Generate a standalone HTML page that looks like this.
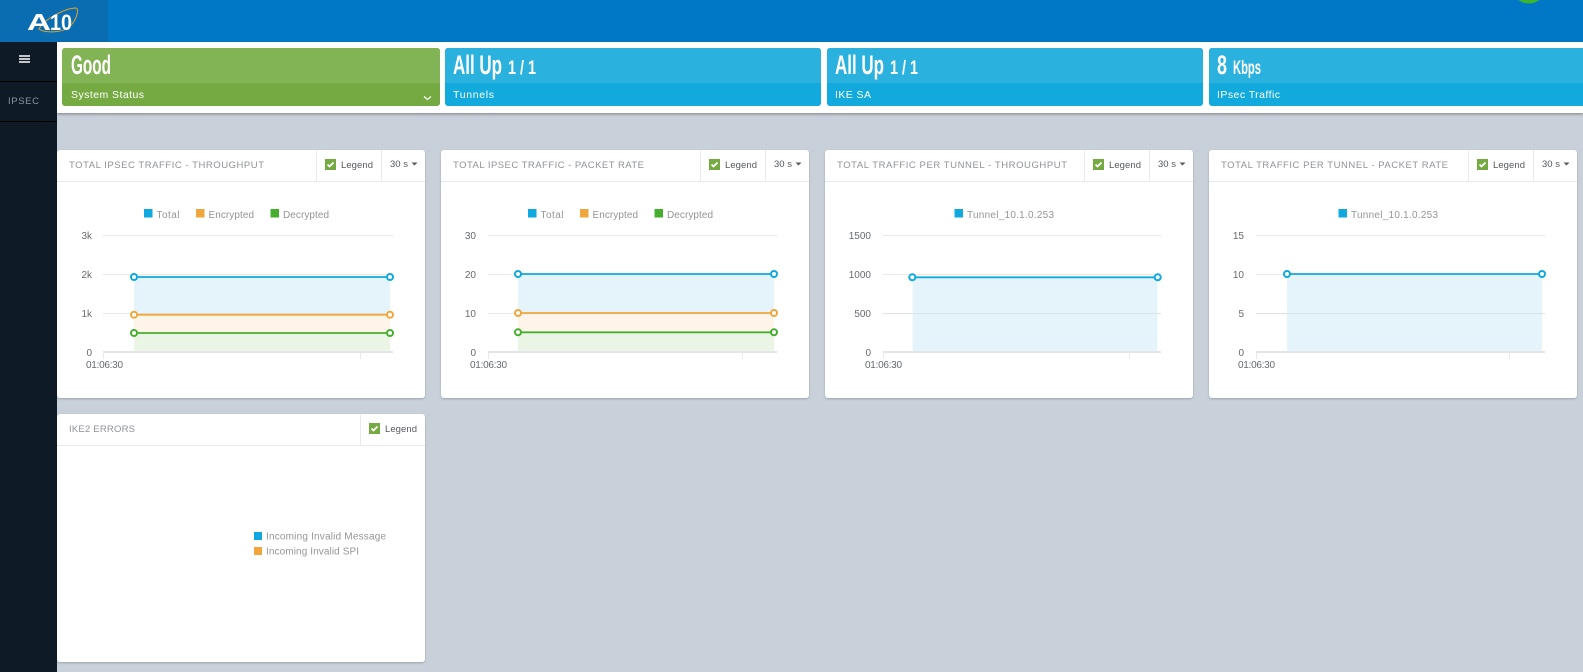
<!DOCTYPE html>
<html><head><meta charset="utf-8"><title>IPsec</title>
<style>
html,body{margin:0;padding:0;background:#c8d0da;width:1583px;height:672px;overflow:hidden}
svg{display:block;position:absolute;left:0;top:0;font-family:"Liberation Sans",sans-serif}
.t{font-size:9.5px;fill:#8f9399}
.l{font-size:10px;fill:#92959a}
.h{font-size:9.5px;fill:#55595e}
.a{font-size:10px;fill:#666a70}
.s{font-size:10.5px;fill:#fff}
.b{font-size:27px;fill:#fff;font-weight:bold}
.m{font-size:19.5px;fill:#fff;font-weight:bold}
.g{stroke:#e7e9ec;stroke-width:1;fill:none}
.x{stroke:#e3e5e8;stroke-width:2;fill:none}
.d{stroke:#e8eaec;stroke-width:1;fill:none}
.card{fill:#fff}
.cb{stroke:#0fa9df;stroke-width:1.8}
.co{stroke:#f1a63c;stroke-width:1.8}
.cg{stroke:#46b02e;stroke-width:1.8}
.pb{fill:#fff;stroke:#0fa9df;stroke-width:2}
.po{fill:#fff;stroke:#f1a63c;stroke-width:2}
.pg{fill:#fff;stroke:#46b02e;stroke-width:2}
</style></head>
<body>
<svg width="1583" height="672" viewBox="0 0 1583 672" xmlns="http://www.w3.org/2000/svg">
<defs>
<filter id="sh" x="-5%" y="-5%" width="110%" height="110%"><feDropShadow dx="0" dy="1" stdDeviation="1" flood-color="#000" flood-opacity=".22"/></filter>
<filter id="sh2" x="-5%" y="-20%" width="110%" height="140%"><feDropShadow dx="0" dy="1.5" stdDeviation="1.2" flood-color="#000" flood-opacity=".3"/></filter>
</defs>

<!-- header -->
<rect x="0" y="0" width="1583" height="42" fill="#0078c5"/>
<rect x="0" y="0" width="108" height="42" fill="#0a6cb1"/>
<ellipse cx="1529" cy="-13" rx="17" ry="16.500" fill="#3cb52f"/>
<!-- logo -->
<g>
<path d="M39 29C43 20 65 8 76 8C80 9 76 22 68 28C60 33 44 33 39 29Z" fill="none" stroke="#e5a52a" stroke-width="1"/>
<text x="27" y="30" font-size="23" font-weight="bold" fill="#fff" textLength="24" lengthAdjust="spacingAndGlyphs">A</text>
<text x="50" y="30" font-size="22" font-weight="bold" fill="#fff" textLength="22" lengthAdjust="spacingAndGlyphs">10</text>
</g>

<!-- top band -->
<rect x="57" y="42" width="1526" height="71" fill="#fff" filter="url(#sh2)"/>

<!-- sidebar -->
<rect x="0" y="42" width="57" height="630" fill="#0e1a25"/>
<rect x="0" y="81" width="57" height="1" fill="#000"/>
<rect x="0" y="121" width="57" height="1" fill="#000"/>
<rect x="19" y="55" width="11" height="2" fill="#c4c7ca"/>
<rect x="19" y="58" width="11" height="2" fill="#c4c7ca"/>
<rect x="19" y="61" width="11" height="2" fill="#c4c7ca"/>
<text x="8" y="104" font-size="9.5" fill="#8b95a0" textLength="31">IPSEC</text>

<!-- tiles -->
<rect x="62" y="48" width="378" height="58" rx="3" fill="#74aa41"/>
<path d="M62 83V51a3 3 0 0 1 3-3H437a3 3 0 0 1 3 3V83Z" fill="#82b354"/>
<text x="71" y="74" class="b" textLength="40" lengthAdjust="spacingAndGlyphs">Good</text>
<text x="71" y="98" class="s" textLength="73">System Status</text>
<path d="M424 96.500l3.500 3 3.500-3" fill="none" stroke="#fff" stroke-width="1.200"/>

<rect x="445" y="48" width="376" height="58" rx="3" fill="#12aadd"/>
<path d="M445 83V51a3 3 0 0 1 3-3H818a3 3 0 0 1 3 3V83Z" fill="#2bb1de"/>
<text x="453" y="74" class="b" textLength="49" lengthAdjust="spacingAndGlyphs">All Up</text>
<text x="508" y="74" class="m" textLength="28" lengthAdjust="spacingAndGlyphs">1 / 1</text>
<text x="453" y="98" class="s" textLength="41">Tunnels</text>

<rect x="827" y="48" width="376" height="58" rx="3" fill="#12aadd"/>
<path d="M827 83V51a3 3 0 0 1 3-3H1200a3 3 0 0 1 3 3V83Z" fill="#2bb1de"/>
<text x="835" y="74" class="b" textLength="49" lengthAdjust="spacingAndGlyphs">All Up</text>
<text x="890" y="74" class="m" textLength="28" lengthAdjust="spacingAndGlyphs">1 / 1</text>
<text x="835" y="98" class="s" textLength="36">IKE SA</text>

<rect x="1209" y="48" width="380" height="58" rx="3" fill="#12aadd"/>
<path d="M1209 83V51a3 3 0 0 1 3-3H1589V83Z" fill="#2bb1de"/>
<text x="1217" y="74" class="b" textLength="10" lengthAdjust="spacingAndGlyphs">8</text>
<text x="1233" y="74" class="m" textLength="28" lengthAdjust="spacingAndGlyphs">Kbps</text>
<text x="1217" y="98" class="s" textLength="63">IPsec Traffic</text>

<!-- CARD 1 -->
<rect class="card" x="57" y="150" width="368" height="248" rx="3" filter="url(#sh)"/>
<path class="d" d="M57 181.500H425M316.500 150V181M381.500 150V181"/>
<text class="t" x="69" y="168" textLength="195">TOTAL IPSEC TRAFFIC - THROUGHPUT</text>
<rect x="325" y="159" width="11" height="11" fill="#74aa41"/><path d="M327.500 164.500l2 2 4-4" fill="none" stroke="#fff" stroke-width="1.800"/>
<text class="h" x="341" y="168" textLength="32">Legend</text>
<text class="h" x="390" y="167" textLength="18">30 s</text>
<path d="M411.500 162.500h6l-3 3z" fill="#55595e"/>
<rect x="144" y="209" width="8.500" height="8.500" fill="#0fa9df"/><text class="l" x="156.500" y="218" textLength="23">Total</text>
<rect x="196" y="209" width="8.500" height="8.500" fill="#f1a63c"/><text class="l" x="208.500" y="218" textLength="45.500">Encrypted</text>
<rect x="270.500" y="209" width="8.500" height="8.500" fill="#46b02e"/><text class="l" x="283" y="218" textLength="46">Decrypted</text>
<rect x="134" y="277" width="256" height="38" fill="#e5f4fa"/><rect x="134" y="315" width="256" height="18" fill="#fef4ea"/><rect x="134" y="333" width="256" height="19" fill="#ebf5e6"/>
<path class="g" d="M103 235.500H393M103 274.500H393M103 313.500H393"/>
<path class="x" d="M103 352H393"/><path class="d" d="M103.500 352V359M360.500 352V359"/>
<text class="a" x="92" y="239" text-anchor="end">3k</text><text class="a" x="92" y="278" text-anchor="end">2k</text><text class="a" x="92" y="317" text-anchor="end">1k</text><text class="a" x="92" y="356" text-anchor="end">0</text>
<text class="a" x="86" y="368" textLength="37">01:06:30</text>
<path class="cb" d="M134 277H390"/><path class="co" d="M134 314.700H390"/><path class="cg" d="M134 333H390"/>
<circle class="pb" cx="134" cy="277" r="3"/><circle class="pb" cx="390" cy="277" r="3"/>
<circle class="po" cx="134" cy="314.700" r="3"/><circle class="po" cx="390" cy="314.700" r="3"/>
<circle class="pg" cx="134" cy="333" r="3"/><circle class="pg" cx="390" cy="333" r="3"/>

<!-- CARD 2 -->
<rect class="card" x="441" y="150" width="368" height="248" rx="3" filter="url(#sh)"/>
<path class="d" d="M441 181.500H809M700.500 150V181M765.500 150V181"/>
<text class="t" x="453" y="168" textLength="191">TOTAL IPSEC TRAFFIC - PACKET RATE</text>
<rect x="709" y="159" width="11" height="11" fill="#74aa41"/><path d="M711.500 164.500l2 2 4-4" fill="none" stroke="#fff" stroke-width="1.800"/>
<text class="h" x="725" y="168" textLength="32">Legend</text>
<text class="h" x="774" y="167" textLength="18">30 s</text>
<path d="M795.500 162.500h6l-3 3z" fill="#55595e"/>
<rect x="528" y="209" width="8.500" height="8.500" fill="#0fa9df"/><text class="l" x="540.500" y="218" textLength="23">Total</text>
<rect x="580" y="209" width="8.500" height="8.500" fill="#f1a63c"/><text class="l" x="592.500" y="218" textLength="45.500">Encrypted</text>
<rect x="654.500" y="209" width="8.500" height="8.500" fill="#46b02e"/><text class="l" x="667" y="218" textLength="46">Decrypted</text>
<rect x="518" y="274" width="256" height="39" fill="#e5f4fa"/><rect x="518" y="313" width="256" height="19" fill="#fef4ea"/><rect x="518" y="332" width="256" height="20" fill="#ebf5e6"/>
<path class="g" d="M488 235.500H777M488 274.500H777M488 313.500H777"/>
<path class="x" d="M488 352H777"/><path class="d" d="M488.500 352V359M742.500 352V359"/>
<text class="a" x="476" y="239" text-anchor="end">30</text><text class="a" x="476" y="278" text-anchor="end">20</text><text class="a" x="476" y="317" text-anchor="end">10</text><text class="a" x="476" y="356" text-anchor="end">0</text>
<text class="a" x="470" y="368" textLength="37">01:06:30</text>
<path class="cb" d="M518 274H774"/><path class="co" d="M518 313H774"/><path class="cg" d="M518 332.300H774"/>
<circle class="pb" cx="518" cy="274" r="3"/><circle class="pb" cx="774" cy="274" r="3"/>
<circle class="po" cx="518" cy="313" r="3"/><circle class="po" cx="774" cy="313" r="3"/>
<circle class="pg" cx="518" cy="332.300" r="3"/><circle class="pg" cx="774" cy="332.300" r="3"/>

<!-- CARD 3 -->
<rect class="card" x="825" y="150" width="368" height="248" rx="3" filter="url(#sh)"/>
<path class="d" d="M825 181.500H1193M1084.500 150V181M1149.500 150V181"/>
<text class="t" x="837" y="168" textLength="230">TOTAL TRAFFIC PER TUNNEL - THROUGHPUT</text>
<rect x="1093" y="159" width="11" height="11" fill="#74aa41"/><path d="M1095.500 164.500l2 2 4-4" fill="none" stroke="#fff" stroke-width="1.800"/>
<text class="h" x="1109" y="168" textLength="32">Legend</text>
<text class="h" x="1158" y="167" textLength="18">30 s</text>
<path d="M1179.500 162.500h6l-3 3z" fill="#55595e"/>
<rect x="954.500" y="209" width="8.500" height="8.500" fill="#0fa9df"/><text class="l" x="967" y="218" textLength="87">Tunnel_10.1.0.253</text>
<rect x="912.500" y="277" width="245" height="75" fill="#e5f4fa"/>
<path class="g" d="M883 235.500H1161M883 274.500H1161"/><path d="M883 313.500H1161" stroke="#d8e2e8" stroke-width="1"/>
<path class="x" d="M883 352H1161"/><path class="d" d="M883.500 352V359M1129.500 352V359"/>
<text class="a" x="871" y="239" text-anchor="end">1500</text><text class="a" x="871" y="278" text-anchor="end">1000</text><text class="a" x="871" y="317" text-anchor="end">500</text><text class="a" x="871" y="356" text-anchor="end">0</text>
<text class="a" x="865" y="368" textLength="37">01:06:30</text>
<path class="cb" d="M912.300 277.300H1157.700"/>
<circle class="pb" cx="912.300" cy="277.300" r="3"/><circle class="pb" cx="1157.700" cy="277.300" r="3"/>

<!-- CARD 4 -->
<rect class="card" x="1209" y="150" width="368" height="248" rx="3" filter="url(#sh)"/>
<path class="d" d="M1209 181.500H1577M1468.500 150V181M1533.500 150V181"/>
<text class="t" x="1221" y="168" textLength="227">TOTAL TRAFFIC PER TUNNEL - PACKET RATE</text>
<rect x="1477" y="159" width="11" height="11" fill="#74aa41"/><path d="M1479.500 164.500l2 2 4-4" fill="none" stroke="#fff" stroke-width="1.800"/>
<text class="h" x="1493" y="168" textLength="32">Legend</text>
<text class="h" x="1542" y="167" textLength="18">30 s</text>
<path d="M1563.500 162.500h6l-3 3z" fill="#55595e"/>
<rect x="1338.500" y="209" width="8.500" height="8.500" fill="#0fa9df"/><text class="l" x="1351" y="218" textLength="87">Tunnel_10.1.0.253</text>
<rect x="1287" y="274" width="255" height="78" fill="#e5f4fa"/>
<path class="g" d="M1256 235.500H1545M1256 274.500H1545"/><path d="M1256 313.500H1545" stroke="#d8e2e8" stroke-width="1"/>
<path class="x" d="M1256 352H1545"/><path class="d" d="M1256.500 352V359M1509.500 352V359"/>
<text class="a" x="1244" y="239" text-anchor="end">15</text><text class="a" x="1244" y="278" text-anchor="end">10</text><text class="a" x="1244" y="317" text-anchor="end">5</text><text class="a" x="1244" y="356" text-anchor="end">0</text>
<text class="a" x="1238" y="368" textLength="37">01:06:30</text>
<path class="cb" d="M1287 274H1542"/>
<circle class="pb" cx="1287" cy="274" r="3"/><circle class="pb" cx="1542" cy="274" r="3"/>

<!-- CARD 5 -->
<rect class="card" x="57" y="414" width="368" height="248" rx="3" filter="url(#sh)"/>
<path class="d" d="M57 445.500H425M360.500 414V445"/>
<text class="t" x="69" y="432" textLength="66">IKE2 ERRORS</text>
<rect x="369" y="423" width="11" height="11" fill="#74aa41"/><path d="M371.500 428.500l2 2 4-4" fill="none" stroke="#fff" stroke-width="1.800"/>
<text class="h" x="385" y="432" textLength="32">Legend</text>
<rect x="254" y="532" width="8" height="8" fill="#0fa9df"/><text class="l" x="266" y="539.500" textLength="120">Incoming Invalid Message</text>
<rect x="254" y="547" width="8" height="8" fill="#f1a63c"/><text class="l" x="266" y="554.500" textLength="93">Incoming Invalid SPI</text>
</svg>
</body></html>
